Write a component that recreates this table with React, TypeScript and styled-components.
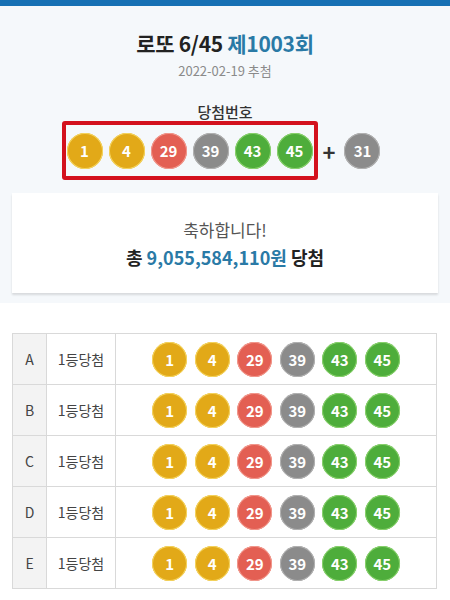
import React from "react";
import styled, { createGlobalStyle } from "styled-components";

const GlobalStyle = createGlobalStyle`
  html, body {
    margin: 0;
    padding: 0;
    background: #f5f8fb;
    font-family: "Noto Sans CJK KR", "Noto Sans", sans-serif;
  }
`;

type BallColor = "yellow" | "red" | "gray" | "green";

const ballColors: Record<BallColor, { bg: string; ring: string }> = {
  yellow: { bg: "#e2a918", ring: "#f5d560" },
  red: { bg: "#e35f53", ring: "#f29a8e" },
  gray: { bg: "#8b8b8b", ring: "#b3b3b3" },
  green: { bg: "#4ead3b", ring: "#8bd26e" },
};

const colorOf = (n: number): BallColor => {
  if (n <= 10) return "yellow";
  if (n <= 30) return "red";
  if (n <= 40) return "gray";
  return "green";
};

const numbers = [1, 4, 29, 39, 43, 45];
const bonus = 31;
const games = ["A", "B", "C", "D", "E"];

const TopBar = styled.div`
  height: 6px;
  background: #1670b4;
`;

const Header = styled.section`
  display: flex;
  flex-direction: column;
  align-items: center;
  padding-top: 22px;
`;

const Title = styled.h1`
  margin: 0;
  font-size: 21px;
  line-height: 30px;
  font-weight: 700;
  color: #222;
  letter-spacing: -0.3px;

  span {
    color: #2a7aa6;
  }
`;

const DrawDate = styled.p`
  margin: 4px 0 0;
  font-size: 13px;
  line-height: 18px;
  color: #8a8a8a;
`;

const Label = styled.h2`
  margin: 22px 0 0;
  font-size: 15px;
  line-height: 20px;
  font-weight: 500;
  color: #333;
`;

const NumberRow = styled.div`
  display: flex;
  align-items: center;
  margin-top: -1px;
  padding-right: 8px;
`;

const Highlight = styled.div`
  display: flex;
  gap: 6px;
  padding: 7.5px 1px;
  border: 4px solid #d3111d;
  border-radius: 3px;
`;

const Plus = styled.span`
  margin: 0 9px 0 5px;
  font-size: 22px;
  font-weight: 700;
  line-height: 1;
  color: #333;
`;

const Ball = styled.div<{ $color: BallColor; $size: number }>`
  width: ${p => p.$size}px;
  height: ${p => p.$size}px;
  border-radius: 50%;
  box-sizing: border-box;
  display: flex;
  align-items: center;
  justify-content: center;
  background: ${p => ballColors[p.$color].bg};
  box-shadow: inset 0 0 0 1px ${p => ballColors[p.$color].ring};
  color: #fff;
  font-size: 15px;
  font-weight: 600;
  flex-shrink: 0;
`;

const Card = styled.div`
  margin: 13px 12px 0;
  height: 100px;
  background: #fff;
  box-shadow: 0 2px 2px rgba(0, 0, 0, 0.12);
  display: flex;
  flex-direction: column;
  align-items: center;
  justify-content: center;
`;

const Congrats = styled.p`
  margin: 2px 0 0;
  font-size: 17px;
  line-height: 24px;
  color: #555;
`;

const Prize = styled.p`
  margin: 2px 0 0;
  font-size: 18px;
  line-height: 26px;
  font-weight: 700;
  color: #222;

  span {
    color: #2a7aa6;
  }
`;

const TableSection = styled.section`
  margin-top: 10px;
  background: #fff;
  padding: 30px 13px 20px 12px;
`;

const Table = styled.div`
  display: grid;
  grid-template-columns: 34px 69px 1fr;
  border-top: 1px solid #d9d9d9;
  border-left: 1px solid #d9d9d9;
`;

const Cell = styled.div<{ $head?: boolean }>`
  height: 50px;
  display: flex;
  align-items: center;
  justify-content: center;
  border-right: 1px solid #d9d9d9;
  border-bottom: 1px solid #d9d9d9;
  background: ${p => (p.$head ? "#f3f3f3" : "#fff")};
  font-size: 14px;
  color: #444;
`;

const BallGroup = styled.div`
  display: flex;
  gap: 7.5px;
`;

const LottoBall = ({ n, size }: { n: number; size: number }) => (
  <Ball $color={colorOf(n)} $size={size}>
    {n}
  </Ball>
);

const App = () => {
  return (
    <>
      <GlobalStyle />
      <TopBar />
      <Header>
        <Title>
          로또 6/45 <span>제1003회</span>
        </Title>
        <DrawDate>2022-02-19 추첨</DrawDate>
        <Label>당첨번호</Label>
        <NumberRow>
          <Highlight>
            {numbers.map(n => (
              <LottoBall key={n} n={n} size={36} />
            ))}
          </Highlight>
          <Plus>+</Plus>
          <LottoBall n={bonus} size={36} />
        </NumberRow>
      </Header>
      <Card>
        <Congrats>축하합니다!</Congrats>
        <Prize>
          총 <span>9,055,584,110원</span> 당첨
        </Prize>
      </Card>
      <TableSection>
        <Table>
          {games.map(g => (
            <React.Fragment key={g}>
              <Cell $head>{g}</Cell>
              <Cell>1등당첨</Cell>
              <Cell>
                <BallGroup>
                  {numbers.map(n => (
                    <LottoBall key={n} n={n} size={35} />
                  ))}
                </BallGroup>
              </Cell>
            </React.Fragment>
          ))}
        </Table>
      </TableSection>
    </>
  );
};

export default App;
